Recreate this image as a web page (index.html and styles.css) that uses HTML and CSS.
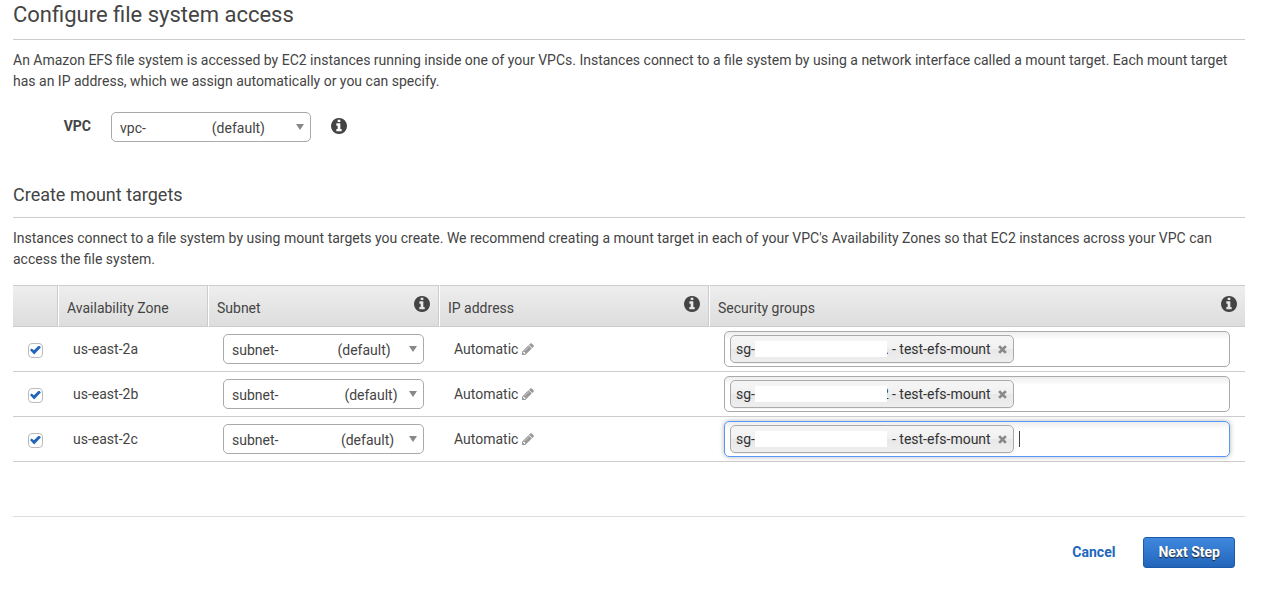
FILE: index.html
```
<!doctype html>
<html lang="en">
<head>
<meta charset="utf-8">
<title>Configure file system access</title>
<link rel="stylesheet" href="styles.css">
</head>

<body>
<svg class="symbols" aria-hidden="true">
	<symbol id="info" viewBox="128 128 1536 1536"><path d="M1152 1376v-160q0-14-9-23t-23-9h-96v-512q0-14-9-23t-23-9h-320q-14 0-23 9t-9 23v160q0 14 9 23t23 9h96v320h-96q-14 0-23 9t-9 23v160q0 14 9 23t23 9h448q14 0 23-9t9-23zm-128-896v-160q0-14-9-23t-23-9h-192q-14 0-23 9t-9 23v160q0 14 9 23t23 9h192q14 0 23-9t9-23zm640 416q0 209-103 385.5t-279.5 279.5-385.5 103-385.5-103-279.5-279.5-103-385.5 103-385.5 279.5-279.5 385.5-103 385.5 103 279.5 279.5 103 385.5z"/></symbol>
	<symbol id="pencil" viewBox="128 128 1536 1536"><path d="M491 1536l91-91-235-235-91 91v107h128v128h107zm523-928q0-22-22-22-10 0-17 7l-542 542q-7 7-7 17 0 22 22 22 10 0 17-7l542-542q7-7 7-17zm-54-192l416 416-832 832h-416v-416zm683 96q0 53-37 90l-166 166-416-416 166-165q36-38 90-38 53 0 91 38l235 234q37 39 37 91z"/></symbol>
	<symbol id="remove" viewBox="0 0 8 8"><path d="M1 1l6 6M7 1l-6 6" fill="none" stroke="currentColor" stroke-width="2.4"/></symbol>
</svg>

<main class="wizard">
	<h1>Configure file system access</h1>
	<p>An Amazon EFS file system is accessed by EC2 instances running inside one of your VPCs. Instances connect to a file system by using a network interface called a mount target. Each mount target has an IP address, which we assign automatically or you can specify.</p>

	<div class="vpc">
		<label for="vpc">VPC</label>
		<div class="select">
			<select id="vpc"><option>vpc-&nbsp;&nbsp;&nbsp;&nbsp;&nbsp;&nbsp;&nbsp;&nbsp;&nbsp;&nbsp;&nbsp;&nbsp;&nbsp;&nbsp;&nbsp;&nbsp;&nbsp;&nbsp;&nbsp;(default)</option></select>
		</div>
		<svg class="info"><use href="#info"/></svg>
	</div>

	<h2>Create mount targets</h2>
	<p>Instances connect to a file system by using mount targets you create. We recommend creating a mount target in each of your VPC's Availability Zones so that EC2 instances across your VPC can access the file system.</p>

	<table class="targets">
		<thead>
			<tr>
				<th class="col-check"></th>
				<th class="col-zone"><div class="head">Availability Zone</div></th>
				<th class="col-subnet"><div class="head">Subnet<svg class="info"><use href="#info"/></svg></div></th>
				<th class="col-ip"><div class="head">IP address<svg class="info"><use href="#info"/></svg></div></th>
				<th><div class="head">Security groups<svg class="info"><use href="#info"/></svg></div></th>
			</tr>
		</thead>
		<tbody>
			<tr>
				<td class="check"><input type="checkbox" aria-label="us-east-2a" checked></td>
				<td>us-east-2a</td>
				<td>
					<div class="select">
						<select aria-label="Subnet for us-east-2a"><option>subnet-&nbsp;&nbsp;&nbsp;&nbsp;&nbsp;&nbsp;&nbsp;&nbsp;&nbsp;&nbsp;&nbsp;&nbsp;&nbsp;&nbsp;&nbsp;&nbsp;&nbsp;(default)</option></select>
					</div>
				</td>
				<td><div class="ip">Automatic<button class="icon-btn" type="button" aria-label="Edit"><svg class="pencil"><use href="#pencil"/></svg></button></div></td>
				<td>
					<div class="groups">
						<span class="tag">sg-<span class="sg-id">.</span>- test-efs-mount<button class="icon-btn" type="button" aria-label="Remove"><svg class="remove"><use href="#remove"/></svg></button></span>
						<input type="text" aria-label="Security groups for us-east-2a">
					</div>
				</td>
			</tr>
			<tr>
				<td class="check"><input type="checkbox" aria-label="us-east-2b" checked></td>
				<td>us-east-2b</td>
				<td>
					<div class="select">
						<select aria-label="Subnet for us-east-2b"><option>subnet-&nbsp;&nbsp;&nbsp;&nbsp;&nbsp;&nbsp;&nbsp;&nbsp;&nbsp;&nbsp;&nbsp;&nbsp;&nbsp;&nbsp;&nbsp;&nbsp;&nbsp;&nbsp;&nbsp;(default)</option></select>
					</div>
				</td>
				<td><div class="ip">Automatic<button class="icon-btn" type="button" aria-label="Edit"><svg class="pencil"><use href="#pencil"/></svg></button></div></td>
				<td>
					<div class="groups">
						<span class="tag">sg-<span class="sg-id">2</span>- test-efs-mount<button class="icon-btn" type="button" aria-label="Remove"><svg class="remove"><use href="#remove"/></svg></button></span>
						<input type="text" aria-label="Security groups for us-east-2b">
					</div>
				</td>
			</tr>
			<tr>
				<td class="check"><input type="checkbox" aria-label="us-east-2c" checked></td>
				<td>us-east-2c</td>
				<td>
					<div class="select">
						<select aria-label="Subnet for us-east-2c"><option>subnet-&nbsp;&nbsp;&nbsp;&nbsp;&nbsp;&nbsp;&nbsp;&nbsp;&nbsp;&nbsp;&nbsp;&nbsp;&nbsp;&nbsp;&nbsp;&nbsp;&nbsp;&nbsp;(default)</option></select>
					</div>
				</td>
				<td><div class="ip">Automatic<button class="icon-btn" type="button" aria-label="Edit"><svg class="pencil"><use href="#pencil"/></svg></button></div></td>
				<td>
					<div class="groups active">
						<span class="tag">sg-<span class="sg-id"></span>- test-efs-mount<button class="icon-btn" type="button" aria-label="Remove"><svg class="remove"><use href="#remove"/></svg></button></span>
						<input type="text" aria-label="Security groups for us-east-2c">
					</div>
				</td>
			</tr>
		</tbody>
	</table>

	<div class="actions">
		<a class="cancel" href="#">Cancel</a>
		<button class="next" type="button">Next Step</button>
	</div>
</main>
</body>
</html>
```
FILE: styles.css
```
* {box-sizing:border-box; margin:0; padding:0;}
body {background:#fff; color:#444; font:14px/21px Roboto, "Liberation Sans", sans-serif;}
input, select, button {font:inherit; color:inherit;}
.symbols {display:none;}
.wizard {padding:0 37px 0 13px;}

h1 {padding-bottom:9px; font-size:22px; line-height:30px; font-weight:400; border-bottom:1px solid #ccc;}
h2 {margin-top:39px; padding-bottom:8px; font-size:18px; line-height:28px; font-weight:400; border-bottom:1px solid #ccc;}
p {margin-top:10px;}

.info {width:16px; height:16px; fill:#444;}

.vpc {display:flex; align-items:center; margin-top:20px;}
.vpc label {width:78px; margin-right:20px; text-align:right; font-weight:700; line-height:28px; padding-bottom:2px;}
.vpc .info {margin:0 0 2px 20px;}

/* dropdowns */
.select {position:relative; height:30px;}
.vpc .select {width:200px;}
.select:after {content:""; position:absolute; right:7px; top:12px; border:4px solid transparent; border-top:6px solid #888; border-bottom:0; pointer-events:none;}
.select select {appearance:none; display:block; width:100%; height:30px; padding:2px 8px 0; border:1px solid #aaa; border-radius:5px; background:#fff;}

/* mount targets */
.targets {width:100%; margin-top:15px; table-layout:fixed; border-collapse:separate; border-spacing:0;}
.targets th {height:42px; border:1px solid #ccc; border-width:1px 0; background:linear-gradient(#eee, #ddd); font-weight:400; text-align:left;}
.targets th + th {border-left:1px solid #fff;}
.targets th:not(:last-child) {border-right:1px solid #ccc;}
.col-check {width:45px;}
.col-zone {width:150px;}
.col-subnet {width:231px;}
.col-ip {width:270px;}
.head {display:flex; justify-content:space-between; align-items:flex-start; height:32px; padding:4px 8px 0; line-height:28px;}
.head .info {margin-top:2px;}
.targets td {height:45px; padding:0 15px; border-bottom:1px solid #ccc;}
.targets .check {padding:2px 0 0 15px;}

.check input {appearance:none; display:block; width:15px; height:15px; border:1px solid #bbb; border-radius:4px; background:#fff;}
.check input:checked:before {content:""; display:block; width:11px; height:9px; margin:2px 1px; background:#2266bb; clip-path:polygon(0 51%, 15% 32%, 36% 54%, 80% 0, 100% 20%, 38% 100%);}

.icon-btn {display:flex; border:0; background:none;}
.ip {display:flex; align-items:center;}
.pencil {width:12px; height:12px; margin-left:4px; fill:#999;}

.groups {display:flex; align-items:center; height:36px; padding:0 5px; border:1px solid #aaa; border-radius:5px; background:linear-gradient(#eee, #fff 8px);}
.groups input {flex:1; min-width:0; height:16px; margin-left:5px; border:0; outline:0; background:none;}
.groups.active {border-color:#5897fb; box-shadow:0 0 5px rgba(0,0,0,.3);}
.groups.active input {border-left:1px solid #444;}
.tag {display:flex; align-items:center; height:28px; padding:0 6px 0 5px; border:1px solid #aaa; border-radius:5px; color:#333; white-space:nowrap; background:linear-gradient(#f4f4f4 20%, #f0f0f0 50%, #e8e8e8 52%, #eee); box-shadow:0 1px 0 rgba(0,0,0,.05);}
.remove {width:9px; height:9px; margin-left:7px; color:#888;}

/* hidden part of the group id */
.sg-id {position:relative; width:137px; height:21px; padding-right:3px; text-align:right;}
.sg-id:after {content:""; position:absolute; left:0; top:2px; width:132px; height:16px; background:#fff;}

.actions {display:flex; justify-content:flex-end; align-items:center; margin-top:54px; padding:20px 10px 0; border-top:1px solid #ddd;}
.cancel {margin-right:28px; color:#2266bb; font-weight:700; text-decoration:none;}
.next {height:31px; padding:0 14px; border:1px solid #1c5bab; border-radius:3px; background:linear-gradient(#3f88de, #2266bb); color:#fff; font-weight:700; text-shadow:0 1px 1px #222;}
```
